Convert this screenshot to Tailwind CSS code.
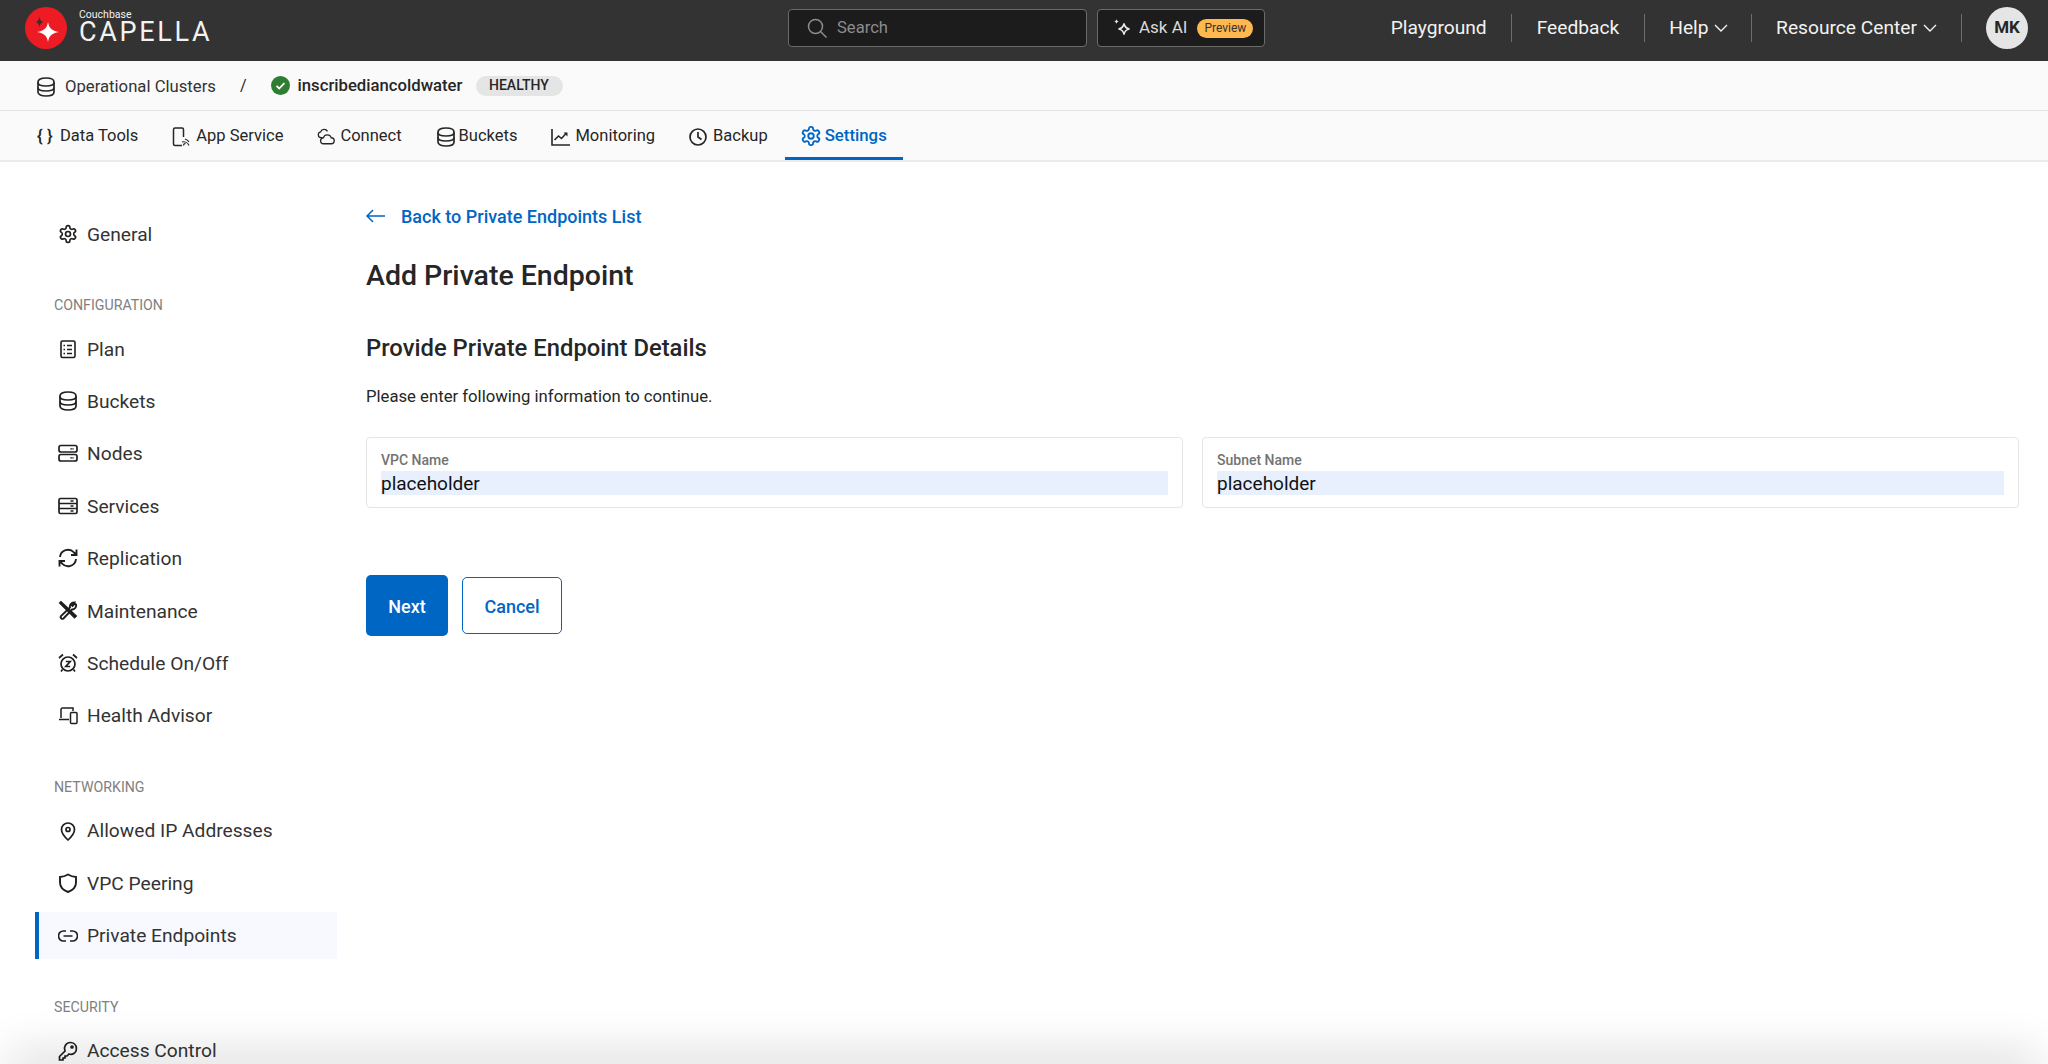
<!DOCTYPE html>
<html lang="en">
<head>
    <meta charset="UTF-8">
    <title>Add Private Endpoint</title>
    <script src="https://cdn.jsdelivr.net/npm/@tailwindcss/browser@4"></script>
</head>
<body class="relative h-screen overflow-hidden bg-white text-[#262626] [font-family:Roboto,sans-serif]">
    <svg class="hidden">
        <symbol id="db" viewBox="3 2 18 20" fill="none" stroke="currentColor" stroke-width="1.700"><path d="M4 7c0-2.500 3.400-4 8-4s8 1.500 8 4v10c0 2.500-3.400 4-8 4s-8-1.500-8-4z"/><path d="M4 7.500c0 2.300 3.400 3.500 8 3.500s8-1.200 8-3.500M4 12.500c0 2.300 3.400 3.500 8 3.500s8-1.200 8-3.500"/></symbol>
        <symbol id="gear" viewBox="0 0 24 24" fill="none" stroke="currentColor" stroke-width="2"><path d="M12.220 2h-.44a2 2 0 0 0-2 2v.18a2 2 0 0 1-1 1.730l-.43.25a2 2 0 0 1-2 0l-.15-.08a2 2 0 0 0-2.730.73l-.22.38a2 2 0 0 0 .73 2.730l.15.1a2 2 0 0 1 1 1.720v.51a2 2 0 0 1-1 1.740l-.15.09a2 2 0 0 0-.73 2.730l.22.38a2 2 0 0 0 2.730.73l.15-.08a2 2 0 0 1 2 0l.43.25a2 2 0 0 1 1 1.730V20a2 2 0 0 0 2 2h.44a2 2 0 0 0 2-2v-.18a2 2 0 0 1 1-1.730l.43-.25a2 2 0 0 1 2 0l.15.08a2 2 0 0 0 2.730-.73l.22-.39a2 2 0 0 0-.73-2.730l-.15-.08a2 2 0 0 1-1-1.740v-.5a2 2 0 0 1 1-1.740l.15-.09a2 2 0 0 0 .73-2.730l-.22-.38a2 2 0 0 0-2.730-.73l-.15.08a2 2 0 0 1-2 0l-.43-.25a2 2 0 0 1-1-1.730V4a2 2 0 0 0-2-2z"/><circle cx="12" cy="12" r="3"/></symbol>
        <symbol id="chev" viewBox="0 0 14 8" fill="none" stroke="currentColor" stroke-width="1.400"><path d="M1 1l6 6 6-6"/></symbol>
    </svg>

    <!-- Top bar -->
    <header class="flex h-[61px] items-center bg-[#333333] pb-[5px] text-[#f2f2f2]">
        <svg class="ml-[25px] h-[42px] w-[42px] shrink-0" viewBox="0 0 42 42">
            <circle cx="21" cy="21" r="21" fill="#ed1c24"/>
            <path d="M23 15c1 6 3.500 8.500 11 10-7.500 1.500-10 4-11 10-1-6-3.500-8.500-11-10 7.500-1.500 10-4 11-10z" fill="#fff"/>
            <path d="M14.500 9.500c.4 3 1.200 4.300 3.500 5.500-2.300 1.200-3.100 2.500-3.500 5.500-.4-3-1.200-4.300-3.500-5.500 2.300-1.200 3.100-2.500 3.500-5.500z" fill="#333"/>
        </svg>
        <div class="mb-[5px] ml-[12px] flex w-[140px] flex-col">
            <span class="h-[13px] text-[10.500px] leading-[12px]">Couchbase</span>
            <span class="h-[20px] text-[27px] leading-[20px] font-normal tracking-[2.700px]">CAPELLA</span>
        </div>
        <div class="ml-[569px] flex h-[38px] w-[299px] items-center rounded-[4px] border border-[#6b6b6b] bg-[#1c1c1c] pl-[18px] text-[#8c8c8c]">
            <svg class="h-[20px] w-[20px]" viewBox="0 0 20 20" fill="none" stroke="currentColor" stroke-width="1.500"><circle cx="8.500" cy="8.500" r="7"/><path d="M13.500 13.500l6 6"/></svg>
            <span class="ml-[10px] text-[16.600px]">Search</span>
        </div>
        <div class="ml-[10px] flex h-[38px] w-[168px] items-center rounded-[4px] border border-[#6b6b6b] bg-[#1c1c1c] pl-[14px]">
            <svg class="h-[20px] w-[20px] text-[#e6e6e6]" viewBox="0 0 20 20" fill="none" stroke="currentColor" stroke-width="1.500"><path d="M12 5.500c.6 3.400 2 4.900 5.500 5.500-3.500.6-4.900 2-5.500 5.500-.6-3.500-2-4.900-5.500-5.500 3.500-.6 4.900-2.100 5.500-5.500z"/><path d="M4.500 1c.3 1.500 1 2.200 2.500 2.500C5.500 3.800 4.800 4.500 4.500 6c-.3-1.500-1-2.200-2.500-2.500C3.500 3.200 4.200 2.500 4.500 1z" fill="currentColor" stroke="none"/></svg>
            <span class="ml-[7px] text-[17px] text-[#d9d9d9]">Ask AI</span>
            <span class="ml-[10px] flex h-[19px] w-[56px] items-center justify-center rounded-full bg-[#ffb84d] text-[12px] text-[#333333]">Preview</span>
        </div>
        <nav class="ml-auto flex items-center text-[19.200px]">
            <span>Playground</span>
            <i class="mx-[24.500px] h-[28px] w-px bg-[#6e6e6e]"></i>
            <span>Feedback</span>
            <i class="mx-[24.500px] h-[28px] w-px bg-[#6e6e6e]"></i>
            <span>Help</span>
            <svg class="ml-[5px] h-[8px] w-[14px]"><use href="#chev"/></svg>
            <i class="mr-[24.500px] ml-[23px] h-[28px] w-px bg-[#6e6e6e]"></i>
            <span>Resource Center</span>
            <svg class="ml-[6px] h-[8px] w-[14px]"><use href="#chev"/></svg>
            <i class="mr-[24.500px] ml-[23.500px] h-[28px] w-px bg-[#6e6e6e]"></i>
        </nav>
        <div class="mr-[20px] flex h-[42px] w-[42px] items-center justify-center rounded-full bg-[#e5e5e5] text-[17px] font-bold text-[#262626]">MK</div>
    </header>

    <!-- Breadcrumb -->
    <div class="flex h-[50px] items-center border-b border-[#e5e5e5] bg-[#fafafa] pl-[37px]">
        <svg class="mt-[3px] h-[20px] w-[18px]"><use href="#db"/></svg>
        <span class="mt-[3px] ml-[10px] text-[16.700px] text-[#333333]">Operational Clusters</span>
        <span class="ml-[24px] text-[16px]">/</span>
        <svg class="ml-[24px] h-[19px] w-[19px]" viewBox="0 0 19 19"><circle cx="9.500" cy="9.500" r="9.500" fill="#2e7d32"/><path d="M5.500 9.800l2.700 2.700 5.200-5.400" fill="none" stroke="#fff" stroke-width="1.800"/></svg>
        <span class="ml-[8px] text-[16.700px] font-medium">inscribediancoldwater</span>
        <span class="ml-[14px] flex h-[20px] w-[87px] items-center justify-center rounded-full bg-[#e5e5e5] pr-[2px] text-[14px] font-medium">HEALTHY</span>
    </div>

    <!-- Tabs -->
    <div class="flex h-[51px] border-b-2 border-[#ebebeb] bg-[#fafafa] pl-[37px] text-[16.500px]">
        <div class="flex items-center pt-[2px]">
            <span class="w-[23px] text-[17px] font-medium">{ }</span>
            <span>Data Tools</span>
        </div>
        <div class="ml-[34px] flex items-center pt-[2px]">
            <svg class="mr-[6px] h-[20px] w-[18px]" viewBox="0 0 18 20" fill="none" stroke="currentColor" stroke-width="1.500"><path d="M10 18.500H3a1.500 1.500 0 0 1-1.500-1.500V2.500A1.500 1.500 0 0 1 3 1h7a1.500 1.500 0 0 1 1.500 1.500V10"/><path d="M12 18.500a1 1 0 0 1 1.500-1.500M10 15a6 6 0 0 1 7 3.500M13 12a6 6 0 0 1 4 3" stroke-width="1.200"/></svg>
            <span>App Service</span>
        </div>
        <div class="ml-[34px] flex items-center pt-[2px]">
            <svg class="mr-[5px] h-[18px] w-[18px]" viewBox="0 0 24 24" fill="none" stroke="currentColor" stroke-width="1.700"><path d="M7 13H5.500a4 4 0 0 1-.6-7.900A5 5 0 0 1 14 4.500"/><path d="M9 21a4 4 0 0 1-.5-8 5.500 5.500 0 0 1 10.500 0 4 4 0 0 1 0 8z"/></svg>
            <span>Connect</span>
        </div>
        <div class="ml-[35px] flex items-center pt-[2px]">
            <svg class="mr-[4px] h-[20px] w-[18px]"><use href="#db"/></svg>
            <span>Buckets</span>
        </div>
        <div class="ml-[34px] flex items-center pt-[2px]">
            <svg class="mr-[5px] h-[18px] w-[19px]" viewBox="0 0 19 18" fill="none" stroke="currentColor" stroke-width="1.600"><path d="M1 1v16h18"/><path d="M3.500 12l4-4 3 2.500 5-5.500"/><path d="M12.500 4.500h4v4" fill="currentColor" stroke="none"/></svg>
            <span>Monitoring</span>
        </div>
        <div class="ml-[34px] flex items-center pt-[2px]">
            <svg class="mr-[6px] h-[18px] w-[18px]" viewBox="0 0 18 18" fill="none" stroke="currentColor" stroke-width="1.700"><circle cx="9" cy="9" r="8"/><path d="M9 4v5l3.500 2.500"/></svg>
            <span>Backup</span>
        </div>
        <div class="ml-[17px] flex h-[49px] w-[118px] items-center border-b-[3px] border-[#0066c4] pt-[3px] pl-[17px] text-[16.800px] font-medium text-[#0066c4]">
            <svg class="mr-[3px] -ml-[2px] h-[22px] w-[22px]"><use href="#gear"/></svg>
            <span>Settings</span>
        </div>
    </div>

    <div class="flex">
        <!-- Sidebar -->
        <aside class="ml-[35px] flex w-[302px] shrink-0 flex-col pt-[48px] text-[19.200px] text-[#333333]">
            <div class="flex h-[47px] items-center border-l-4 border-transparent pl-[19px]">
                <svg class="mr-[9px] h-[20px] w-[20px] text-[#1f1f1f]"><use href="#gear"/></svg><span class="pt-[3px]">General</span>
            </div>

            <h3 class="mt-[38px] mb-[10px] ml-[19px] flex h-[20px] items-center pt-[2px] text-[14.200px] text-[#808080]">CONFIGURATION</h3>
            <div class="flex flex-col gap-[5.400px]">
                <div class="flex h-[47px] items-center border-l-4 border-transparent pl-[19px]">
                    <svg class="mr-[9px] h-[20px] w-[20px] text-[#1f1f1f]" viewBox="0 0 20 20" fill="none" stroke="currentColor" stroke-width="1.600"><rect x="3" y="2" width="14" height="16.500" rx="1.500"/><path d="M9 6.500h5M9 10.500h5M9 14.500h5M5.500 6.500h1.500M5.500 10.500h1.500M5.500 14.500h1.500"/></svg><span class="pt-[3px]">Plan</span>
                </div>
                <div class="flex h-[47px] items-center border-l-4 border-transparent pl-[19px]">
                    <svg class="mr-[10px] ml-[1px] h-[20px] w-[18px] text-[#1f1f1f]"><use href="#db"/></svg><span class="pt-[3px]">Buckets</span>
                </div>
                <div class="flex h-[47px] items-center border-l-4 border-transparent pl-[19px]">
                    <svg class="mr-[9px] h-[20px] w-[20px] text-[#1f1f1f]" viewBox="0 0 20 20" fill="none" stroke="currentColor" stroke-width="1.700"><rect x="1" y="2.500" width="18" height="6.500" rx="2"/><rect x="1" y="11.500" width="18" height="6.500" rx="2"/><path d="M12.500 5.800h3M12.500 14.800h3" stroke-dasharray="1.200 .8"/></svg><span class="pt-[3px]">Nodes</span>
                </div>
                <div class="flex h-[47px] items-center border-l-4 border-transparent pl-[19px]">
                    <svg class="mr-[9px] h-[20px] w-[20px] text-[#1f1f1f]" viewBox="0 0 20 20" fill="none" stroke="currentColor" stroke-width="1.700"><rect x="1" y="2.500" width="18" height="15" rx="1.500"/><path d="M1 7.500h18M1 12.500h18M12.500 5h3M12.500 10h3M12.500 15h3"/></svg><span class="pt-[3px]">Services</span>
                </div>
                <div class="flex h-[47px] items-center border-l-4 border-transparent pl-[19px]">
                    <svg class="mr-[9px] h-[20px] w-[20px] text-[#1f1f1f]" viewBox="0 0 20 20" fill="none" stroke="currentColor" stroke-width="1.900"><path d="M2 9a8 8 0 0 1 14-4.500l2.500 2.500M18.500 1.500V7H13M18 11a8 8 0 0 1-14 4.500L1.500 13M1.500 18.500V13H7"/></svg><span class="pt-[3px]">Replication</span>
                </div>
                <div class="flex h-[47px] items-center border-l-4 border-transparent pl-[19px]">
                    <svg class="mr-[9px] h-[20px] w-[20px] text-[#1f1f1f]" viewBox="0 0 20 20" fill="none" stroke="currentColor" stroke-width="1.900"><path d="M3 2l-1 1 14.500 14.500 1.500-1.500z" fill="currentColor"/><path d="M17 3.500l-2.500 2.500-1-1 2.500-2.500a4 4 0 0 0-4 5L3 16a1.800 1.800 0 0 0 2.500 2.500l8.500-9a4 4 0 0 0 4-5z"/></svg><span class="pt-[3px]">Maintenance</span>
                </div>
                <div class="flex h-[47px] items-center border-l-4 border-transparent pl-[19px]">
                    <svg class="mr-[9px] h-[20px] w-[20px] text-[#1f1f1f]" viewBox="0 0 20 20" fill="none" stroke="currentColor" stroke-width="1.700"><circle cx="10" cy="11" r="7"/><path d="M1 5l4-3.500M19 5l-4-3.500M4.500 16.500L3 18.500M15.500 16.500l1.500 2M7.800 8.500h4.400l-4.400 5h4.400"/></svg><span class="pt-[3px]">Schedule On/Off</span>
                </div>
                <div class="flex h-[47px] items-center border-l-4 border-transparent pl-[19px]">
                    <svg class="mr-[9px] h-[20px] w-[20px] text-[#1f1f1f]" viewBox="0 0 20 20" fill="none" stroke="currentColor" stroke-width="1.500"><path d="M3 13V4.500A1.500 1.500 0 0 1 4.500 3H15v3M1 14.500h10"/><rect x="12.500" y="7.500" width="6.500" height="11" rx="1"/></svg><span class="pt-[3px]">Health Advisor</span>
                </div>
            </div>

            <h3 class="mt-[38.500px] mb-[10px] ml-[19px] flex h-[20px] items-center text-[14.200px] text-[#808080]">NETWORKING</h3>
            <div class="flex flex-col gap-[5.400px]">
                <div class="flex h-[47px] items-center border-l-4 border-transparent pl-[19px]">
                    <svg class="mr-[9px] h-[20px] w-[20px] text-[#1f1f1f]" viewBox="0 0 20 20" fill="none" stroke="currentColor" stroke-width="1.700"><path d="M10 19s-6.500-6-6.500-10.500a6.500 6.500 0 0 1 13 0C16.500 13 10 19 10 19z"/><circle cx="10" cy="8.500" r="2"/></svg><span class="pt-[2px]">Allowed IP Addresses</span>
                </div>
                <div class="flex h-[47px] items-center border-l-4 border-transparent pl-[19px]">
                    <svg class="mr-[9px] h-[20px] w-[20px] text-[#1f1f1f]" viewBox="0 0 20 20" fill="none" stroke="currentColor" stroke-width="1.900"><path d="M10 1.500c2.500 1.500 5 2.300 8 2.500v5.500c0 4.500-3.500 7.800-8 9.500-4.500-1.700-8-5-8-9.500V4c3-.2 5.500-1 8-2.500z"/></svg><span class="pt-[2px]">VPC Peering</span>
                </div>
                <div class="flex h-[47px] items-center border-l-4 border-[#0066c4] bg-[#f8f9ff] pl-[19px]">
                    <svg class="mr-[9px] h-[20px] w-[20px] text-[#1f1f1f]" viewBox="0 0 20 20" fill="none" stroke="currentColor" stroke-width="1.700"><path d="M8 5H5.500a5 5 0 0 0 0 10H8M12 5h2.500a5 5 0 0 1 0 10H12M5.500 10h9"/></svg><span class="pt-[2px]">Private Endpoints</span>
                </div>
            </div>

            <h3 class="mt-[38px] mb-[10px] ml-[19px] flex h-[20px] items-center pt-[2px] text-[14.200px] text-[#808080]">SECURITY</h3>
            <div class="flex h-[47px] items-center border-l-4 border-transparent pl-[19px]">
                <svg class="mr-[9px] h-[20px] w-[20px] text-[#1f1f1f]" viewBox="0 0 20 20" fill="none" stroke="currentColor" stroke-width="1.700"><path d="M12.500 1.500a6 6 0 0 1 1 11.900 6 6 0 0 1-2.500-.4L9 15H7v2H5v2H1.500v-3.500L7 10a6 6 0 0 1 5.500-8.500z"/><circle cx="14" cy="6" r="1"/></svg><span class="pt-[2px]">Access Control</span>
            </div>
        </aside>

        <!-- Main content -->
        <main class="flex-1 pt-[42px] pr-[29px] pl-[29px]">
            <a href="#" class="flex h-[24px] items-center text-[18px] font-medium text-[#0066c4]">
                <svg class="mr-[16px] h-[14px] w-[19px]" viewBox="0 0 19 14" fill="none" stroke="currentColor" stroke-width="1.500"><path d="M19 7H1.500M7 1L1 7l6 6"/></svg>
                Back to Private Endpoints List
            </a>
            <h1 class="mt-[30px] h-[36px] text-[28.500px] leading-[36px] font-medium">Add Private Endpoint</h1>
            <h2 class="mt-[38px] h-[32px] text-[23.800px] leading-[32px] font-medium">Provide Private Endpoint Details</h2>
            <p class="mt-[21px] h-[23px] text-[16.700px] leading-[24px]">Please enter following information to continue.</p>

            <div class="mt-[29px] grid grid-cols-2 gap-[19px]">
                <div class="h-[71px] rounded-[4px] border border-[#e5e5e5] px-[14px] pt-[12px]">
                    <label class="block h-[21px] text-[14px] leading-[20px] font-medium text-[#737373]">VPC Name</label>
                    <input value="placeholder" class="block h-[24px] w-full bg-[#e8f0fe] pt-[2px] text-[19px] text-[#111111] outline-none">
                </div>
                <div class="h-[71px] rounded-[4px] border border-[#e5e5e5] px-[14px] pt-[12px]">
                    <label class="block h-[21px] text-[14px] leading-[20px] font-medium text-[#737373]">Subnet Name</label>
                    <input value="placeholder" class="block h-[24px] w-full bg-[#e8f0fe] pt-[2px] text-[19px] text-[#111111] outline-none">
                </div>
            </div>

            <div class="mt-[67px] flex items-center gap-[14px]">
                <button class="h-[61px] w-[82px] rounded-[5px] bg-[#0066c4] pt-[1px] text-[18px] font-medium text-white">Next</button>
                <button class="h-[57px] w-[100px] rounded-[5px] border border-[#0066c4] pt-[1px] text-[18px] font-medium text-[#0066c4]">Cancel</button>
            </div>
        </main>
    </div>

    <!-- Bottom fade -->
    <div class="absolute top-full right-[20px] left-[20px] h-[10px] shadow-[0_0_45px_12px_rgba(0,0,0,0.14)]"></div>
</body>
</html>
